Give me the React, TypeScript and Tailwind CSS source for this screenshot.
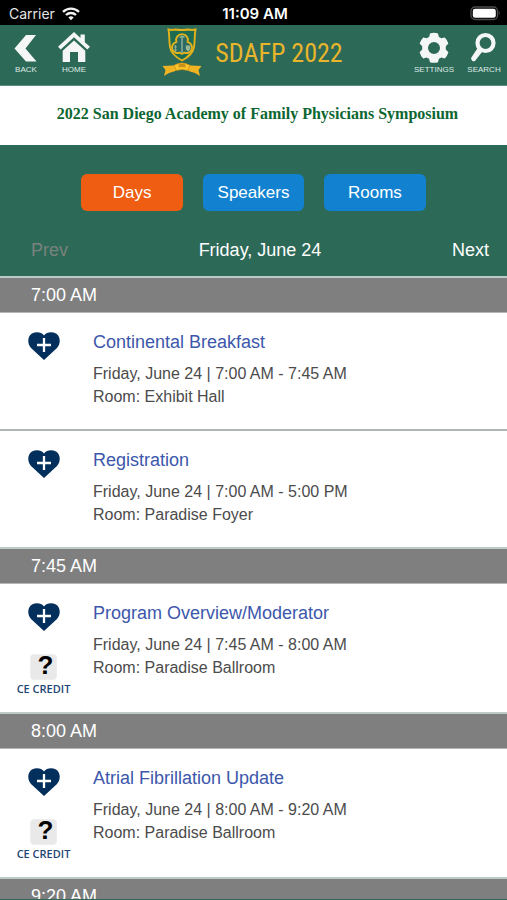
import type { ReactNode } from "react";

type Session = { title: string; when: string; room: string; credit?: boolean };
type Slot = { time: string; sessions: Session[] };

const slots: Slot[] = [
  {
    time: "7:00 AM",
    sessions: [
      { title: "Continental Breakfast", when: "Friday, June 24 | 7:00 AM - 7:45 AM", room: "Room: Exhibit Hall" },
      { title: "Registration", when: "Friday, June 24 | 7:00 AM - 5:00 PM", room: "Room: Paradise Foyer" },
    ],
  },
  {
    time: "7:45 AM",
    sessions: [
      { title: "Program Overview/Moderator", when: "Friday, June 24 | 7:45 AM - 8:00 AM", room: "Room: Paradise Ballroom", credit: true },
    ],
  },
  {
    time: "8:00 AM",
    sessions: [
      { title: "Atrial Fibrillation Update", when: "Friday, June 24 | 8:00 AM - 9:20 AM", room: "Room: Paradise Ballroom", credit: true },
    ],
  },
  { time: "9:20 AM", sessions: [] },
];

function StatusBar() {
  return (
    <div className="grid h-[25px] shrink-0 grid-cols-3 items-center bg-black pt-[2px] pr-[6px] pl-[9px] font-['Inter',sans-serif] text-[14px] leading-5 text-[#e4e4e4]">
      <div className="flex items-center gap-[7px]">
        <span>Carrier</span>
        <svg width="18" height="14" viewBox="0 0 18 14" fill="none" stroke="#f2f2f2" strokeWidth="2.3" aria-hidden="true">
          <path d="M1 4.9a11.5 11.5 0 0 1 16 0" />
          <path d="M4 8a7.2 7.2 0 0 1 10 0" />
          <path d="M6.4 10.5a3.8 3.8 0 0 1 5.2 0L9 13.2z" fill="#f2f2f2" stroke="none" />
        </svg>
      </div>
      <span className="text-center text-[15px] font-semibold whitespace-nowrap text-white">11:09 AM</span>
      <svg className="justify-self-end" width="31" height="15" viewBox="0 0 31 15" aria-hidden="true">
        <rect x="1" y="1" width="26.500" height="12.500" rx="4" fill="none" stroke="#4c4c4c" strokeWidth="1.300" />
        <rect x="2.800" y="2.800" width="23" height="9" rx="2.300" fill="#fff" />
        <path d="M28.700 5q2 2.200 0 4.400z" fill="#4c4c4c" />
      </svg>
    </div>
  );
}

function ToolButton({ label, width, children }: { label: string; width: string; children: ReactNode }) {
  return (
    <button type="button" className={`flex flex-col items-center ${width}`}>
      <svg width="34" height="32" viewBox="0 0 34 32" fill="#f4f7f6" aria-hidden="true">
        {children}
      </svg>
      <span className="mt-[2px] text-[8px] leading-[10px] text-[#dfe9e6]">{label}</span>
    </button>
  );
}

function Crest() {
  return (
    <svg width="42" height="50" viewBox="0 0 42 50" aria-hidden="true">
      <path d="M7.500 1.500q3.500.9 6.800 0 6.700 1 13.400 0 3.300.9 6.800 0c-1 5-.6 11-1.400 17C32.300 25 27.500 29 21 32.500 14.500 29 9.700 25 8.900 18.500 8.100 12.500 8.500 6.500 7.500 1.500z" fill="#1d6b50" stroke="#e3b21b" strokeWidth="1.900" />
      <path d="M15.300 14a6 6 0 1 1 11.400 0 5.600 5.600 0 1 1-3.500 10.600q-2.200 2.300-4.400 0A5.600 5.600 0 1 1 15.300 14z" fill="#2b6a60" stroke="#e3b21b" strokeWidth="1.900" />
      <path d="M21 8v17M18.500 9.500q2.500-2.500 5 0" fill="none" stroke="#8fae9c" strokeWidth="1.500" />
      <path d="M14.500 17v7M13 19h3M13 22h3" stroke="#8fae8c" strokeWidth="1" />
      <path d="M24.800 17.500h4.400v3q-.4 2-2.200 3-1.800-1-2.200-3z" fill="#9ab796" />
      <path d="M12 37.500q9-5 18 0l10.500.5-3 4 1.500 6q-5-4-10-4.500l-3-1.500q-5-1.500-10 0l-3 1.500Q8 44 3 48l1.500-6-3-4z" fill="#f0b321" />
      <path d="M13 37.500q8-5 16 0l-2.500 5q-5.500-2-11 0z" fill="#fac62c" stroke="#c88b12" strokeWidth=".7" />
      <path d="M17.500 36.500q3.500-1.500 7 0v3q-3.500-1-7 0z" fill="#c8901a" />
    </svg>
  );
}

function Header() {
  return (
    <header className="flex h-[61px] shrink-0 items-start justify-between border-b border-[#5d8c7e] bg-[#2d6957] pt-[6px] pr-[3px] pl-2">
      <div className="flex gap-3">
        <ToolButton label="BACK" width="w-9">
          <path d="M17 4h10L16.500 17.500 27.500 30.500H17L5.500 17.500z" />
        </ToolButton>
        <ToolButton label="HOME" width="w-9">
          <path d="M17 1l6.500 6V3.500h4.300v7.700l5.200 4.500-2.700 2.800L17 6.300 3.700 18.500 1 15.700z" />
          <path d="M17 9.500l11.300 10.200V31h-7.300V21h-8v10H5.700V19.700z" />
        </ToolButton>
      </div>
      <div className="-mt-[3px] flex items-center gap-3">
        <Crest />
        <h1 className="text-[26px] leading-8 whitespace-nowrap text-[#e9b52b] font-['Liberation_Sans_Narrow','Roboto_Condensed','Open_Sans_Condensed','Liberation_Sans',sans-serif]">
          SDAFP 2022
        </h1>
      </div>
      <div className="flex gap-2">
        <ToolButton label="SETTINGS" width="w-11">
          <path
            fillRule="evenodd"
            d="M13 2.600q4-1.500 8 0l.9 3.400q1.300.5 2.300 1.300l3.600-.9q2.600 2.600 3.600 6.200l-2.600 2.700v3.200l2.600 2.700q-1 3.600-3.600 6.200l-3.600-.9q-1 .8-2.300 1.300L21 31.200q-4 1.200-8 0l-.9-3.400q-1.300-.5-2.300-1.300l-3.600.9q-2.600-2.600-3.600-6.200l2.600-2.700v-3.200l-2.600-2.700q1-3.600 3.600-6.200l3.600.9q1-.8 2.300-1.300zM17 11a6 6 0 1 0 0 12 6 6 0 0 0 0-12z"
          />
        </ToolButton>
        <ToolButton label="SEARCH" width="w-10">
          <circle cx="18.500" cy="12" r="8" fill="none" stroke="#f4f7f6" strokeWidth="4.200" />
          <path d="M11 16.500l4.200 4.200-7 9q-1.500 1.300-3.200-.3t-.5-3.200z" />
        </ToolButton>
      </div>
    </header>
  );
}

function HeartButton({ title }: { title: string }) {
  return (
    <button type="button" aria-label={`Add ${title} to favorites`}>
      <svg width="34" height="30" viewBox="0 0 34 30">
        <path d="M17 29L4 17C-.3 12 .8 5 5 2.500 9.500.2 14.500 1.200 17 4.500c2.500-3.300 7.500-4.300 12-2C33.200 5 34.300 12 30 17z" fill="#032f5d" />
        <path d="M17 7v14M10 14h14" stroke="#fff" strokeWidth="2.300" />
      </svg>
    </button>
  );
}

function CreditBadge() {
  return (
    <div className="mt-[22px] flex flex-col items-center">
      <div className="flex h-[26px] w-[27px] items-center justify-center rounded-sm border border-[#eeeeee] bg-[#e9e9e9] pb-1 pl-1 text-[26px] leading-none font-bold text-black">
        ?
      </div>
      <span className="mt-[2px] font-['Open_Sans',sans-serif] text-[11px] leading-[14px] font-semibold whitespace-nowrap text-[#1c4674]">
        CE CREDIT
      </span>
    </div>
  );
}

function SessionRow({ session }: { session: Session }) {
  return (
    <li className={`flex bg-white pt-[18px] ${session.credit ? "pb-4" : "pb-[21px]"}`}>
      <div className="flex w-[87px] shrink-0 flex-col items-center">
        <HeartButton title={session.title} />
        {session.credit && <CreditBadge />}
      </div>
      <div className="min-w-0 flex-1 pl-[6px] text-[16px] leading-[23px] text-[#4b4b4b]">
        <h3 className="mb-2 text-[18px] leading-[23px] text-[#3c57ab]">
          <a href="#session">{session.title}</a>
        </h3>
        <p>{session.when}</p>
        <p>{session.room}</p>
      </div>
    </li>
  );
}

const tabBase = "h-[37px] w-1/5 rounded-md text-[17px] leading-5 text-white";

export default function App() {
  return (
    <div className="flex h-screen flex-col overflow-hidden border-b border-[#2d6957] bg-white font-['Liberation_Sans',Arial,sans-serif]">
      <StatusBar />
      <Header />
      <div className="shrink-0 bg-white pt-4 pb-[19px] pl-2 text-center font-['Liberation_Serif',serif] text-[16px] leading-6 font-bold text-[#0d6631]">
        2022 San Diego Academy of Family Physicians Symposium
      </div>
      <nav className="shrink-0 bg-[#2d6957] pt-[29px]">
        <div className="flex justify-center gap-5">
          <button type="button" className={`${tabBase} bg-[#ee5d12]`}>Days</button>
          <button type="button" className={`${tabBase} bg-[#1282d0]`}>Speakers</button>
          <button type="button" className={`${tabBase} bg-[#1282d0]`}>Rooms</button>
        </div>
        <div className="mt-7 flex items-center justify-between pr-[18px] pb-[14px] pl-[31px] text-[18px] leading-[23px] text-white">
          <button type="button" disabled className="w-10 text-left text-[#7a827e]">Prev</button>
          <span>Friday, June 24</span>
          <button type="button" className="w-10 text-right">Next</button>
        </div>
      </nav>
      <main className="min-h-0 flex-1 overflow-hidden">
        {slots.map((slot) => (
          <section key={slot.time}>
            <h2 className="border-t-2 border-b border-t-[#bccac6] border-b-[#b5b5b5] bg-[#7f7f7f] pt-[6px] pb-[5px] pl-[31px] text-[18px] leading-[23px] text-white">
              {slot.time}
            </h2>
            <ul className="divide-y-2 divide-[#b0b5b5]">
              {slot.sessions.map((session) => (
                <SessionRow key={session.title} session={session} />
              ))}
            </ul>
          </section>
        ))}
      </main>
    </div>
  );
}
